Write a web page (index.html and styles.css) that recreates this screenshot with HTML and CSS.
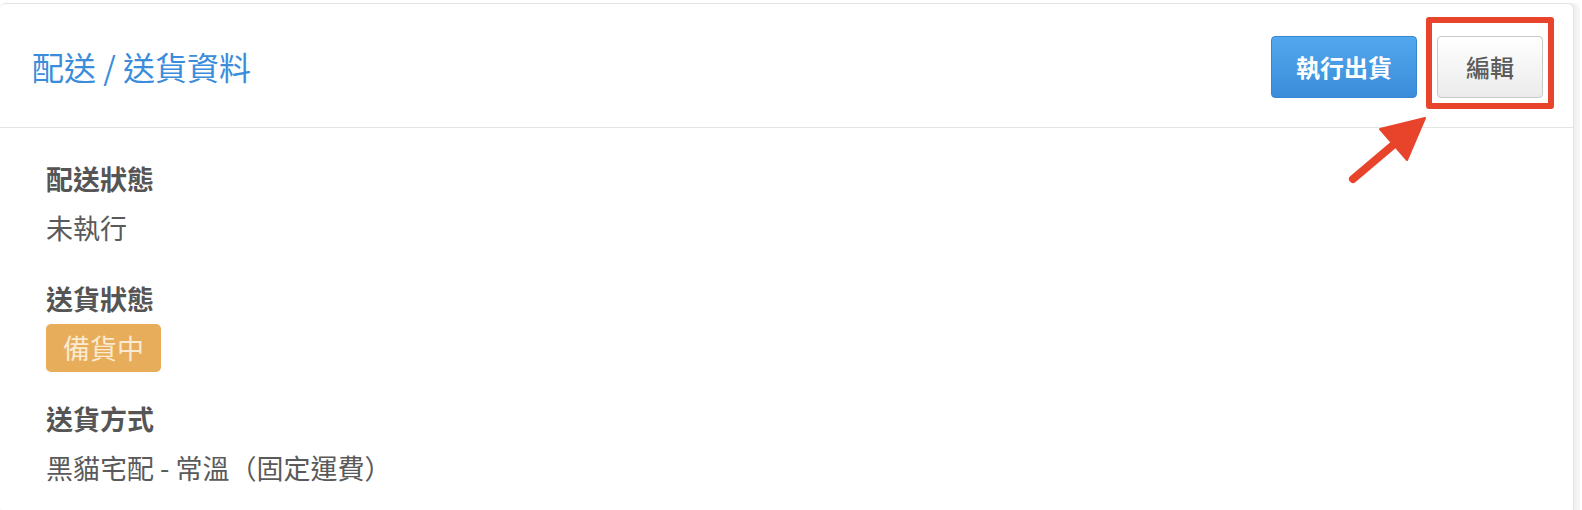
FILE: index.html
```html
<!DOCTYPE html>
<html lang="zh-Hant">
<head>
<meta charset="utf-8">
<title>配送 / 送貨資料</title>
<link rel="stylesheet" href="styles.css">
</head>
<body>
<div class="panel">
  <div class="panel-header">
    <h2 class="panel-title">配送 / 送貨資料</h2>
    <div class="actions">
      <button class="btn btn-primary">執行出貨</button>
      <button class="btn btn-default">編輯</button>
    </div>
  </div>
  <div class="panel-body">
    <div class="field">
      <div class="field-label">配送狀態</div>
      <div class="field-value">未執行</div>
    </div>
    <div class="field">
      <div class="field-label">送貨狀態</div>
      <div class="field-value"><span class="badge">備貨中</span></div>
    </div>
    <div class="field">
      <div class="field-label">送貨方式</div>
      <div class="field-value">黑貓宅配 - 常溫（固定運費）</div>
    </div>
  </div>
  <div class="highlight-box"></div>
  <svg class="arrow" width="100" height="90" viewBox="0 0 100 90">
    <line x1="13" y1="74" x2="52" y2="41" stroke="#e8432b" stroke-width="8" stroke-linecap="round"/>
    <polygon points="85,13 40,24 67,55" fill="#e8432b" stroke="#e8432b" stroke-width="2" stroke-linejoin="round"/>
  </svg>
</div>
</body>
</html>
```
FILE: styles.css
```css
html, body {
  margin: 0;
  padding: 0;
  background: #ffffff;
}

body {
  font-family: "Noto Sans CJK TC", "Noto Sans", sans-serif;
  color: #555555;
  overflow: hidden;
}

.panel {
  position: relative;
  box-sizing: border-box;
  width: 1574px;
  margin-top: 3px;
  border: 1px solid #e2e2e2;
  border-left: 0;
  border-radius: 6px;
  background: #ffffff;
  box-shadow: 3px 0 0 #f1f1f1, 6px 0 0 #f6f6f6;
}

.panel-header {
  box-sizing: border-box;
  height: 124px;
  display: flex;
  align-items: center;
  justify-content: space-between;
  padding: 0 30px 0 32px;
  border-bottom: 1px solid #e4e4e4;
}

.panel-title {
  margin: 0;
  font-size: 32px;
  font-weight: 400;
  color: #3b8ddb;
  line-height: 40px;
}

.actions {
  display: flex;
  gap: 20px;
  padding-top: 2px;
}

.btn {
  box-sizing: border-box;
  height: 62px;
  font-family: inherit;
  font-size: 24px;
  font-weight: 700;
  border-radius: 4px;
  cursor: pointer;
}

.btn-primary {
  width: 146px;
  color: #ffffff;
  background: linear-gradient(#52a8ee, #3b8cd9);
  border: 1px solid #3886d0;
}

.btn-default {
  width: 106px;
  color: #5c5c5c;
  font-weight: 500;
  background: linear-gradient(#ffffff, #ebebeb);
  border: 1px solid #c9c9c9;
}

.panel-body {
  padding: 32px 46px 26px;
}

.field + .field {
  margin-top: 33px;
}

.field-label {
  font-size: 27px;
  line-height: 38px;
  font-weight: 700;
  color: #555555;
  margin-bottom: 11px;
}

.field-value {
  font-size: 27px;
  line-height: 38px;
  color: #5a5a5a;
}

.badge {
  display: inline-block;
  line-height: 38px;
  padding: 5px 17px;
  margin: -5px 0;
  border-radius: 5px;
  background: #e8ad5b;
  color: #fbead2;
}

.highlight-box {
  position: absolute;
  left: 1426px;
  top: 13px;
  width: 128px;
  height: 92px;
  box-sizing: border-box;
  border: 6px solid #e8432b;
  border-radius: 3px;
}

.arrow {
  position: absolute;
  left: 1340px;
  top: 101px;
}
```
